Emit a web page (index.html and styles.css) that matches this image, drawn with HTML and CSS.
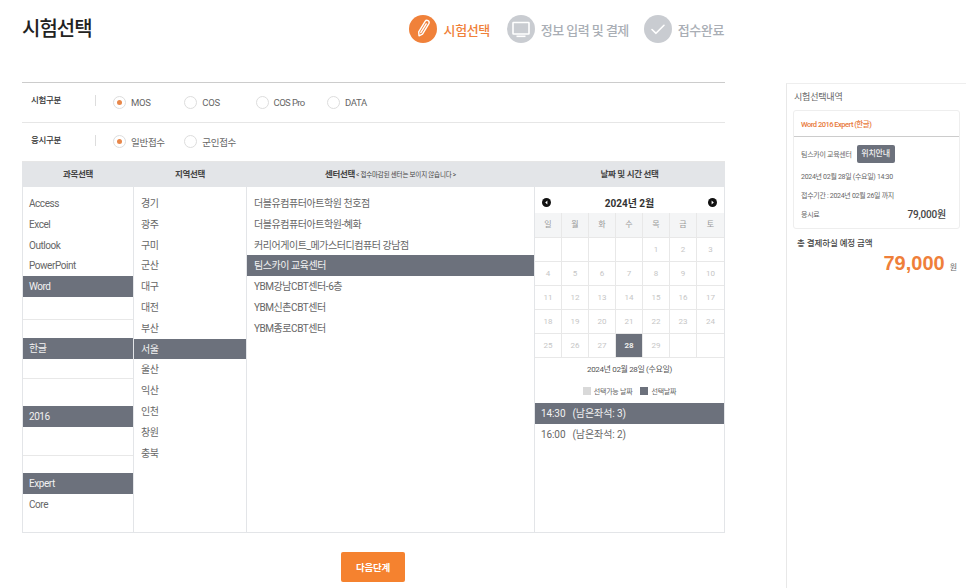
FILE: index.html
```html
<!DOCTYPE html>
<html lang="ko">
  <head>
    <meta charset="utf-8" />
    <title>시험선택</title>
    <link rel="stylesheet" href="styles.css">
  </head>

  <body>
    <div class="page">
      <div class="main">
        <!-- 상단 제목, 단계 -->
        <div class="top">
          <h1 class="title">시험선택</h1>
          <div class="steps">
            <div class="step step-on">
              <span class="step-icon">
                <svg width="28" height="28" viewBox="0 0 28 28" fill="none" stroke="#fff" stroke-width="1.4" stroke-linejoin="round" stroke-linecap="round">
                  <path d="M10 20.8L9.7 16.9L16.1 6.4A2.2 2.2 0 0 1 19.9 8.6L13.5 19.1Z" />
                  <path d="M11.8 17.6L17.2 8.8" />
                </svg>
              </span>
              <span class="step-text">시험선택</span>
            </div>
            <div class="step">
              <span class="step-icon">
                <svg width="28" height="28" viewBox="0 0 28 28" fill="none" stroke="#fff" stroke-width="1.6">
                  <rect x="6" y="7.5" width="16" height="11.5" rx="0.5" />
                  <path d="M9.5 21.3h9" />
                </svg>
              </span>
              <span class="step-text step-text-long">정보 입력 및 결제</span>
            </div>
            <div class="step">
              <span class="step-icon">
                <svg width="28" height="28" viewBox="0 0 28 28" fill="none" stroke="#fff" stroke-width="1.6" stroke-linecap="round" stroke-linejoin="round">
                  <path d="M8 14.5l4 3.8 8-8" />
                </svg>
              </span>
              <span class="step-text">접수완료</span>
            </div>
          </div>
        </div>

        <!-- 시험구분 -->
        <div class="filter filter-first">
          <div class="filter-label">시험구분</div>
          <div class="options">
            <div class="option option-on"><span class="radio"></span>MOS</div>
            <div class="option"><span class="radio"></span>COS</div>
            <div class="option"><span class="radio"></span><span class="tight">COS Pro</span></div>
            <div class="option"><span class="radio"></span>DATA</div>
          </div>
        </div>
        <div class="filter">
          <div class="filter-label">응시구분</div>
          <div class="options">
            <div class="option option-on"><span class="radio"></span>일반접수</div>
            <div class="option"><span class="radio"></span>군인접수</div>
          </div>
        </div>

        <!-- 선택 테이블 -->
        <div class="picker">
          <div class="col col-subject">
            <div class="col-head">과목선택</div>
            <div class="subject-group group-a">
              <div class="item">Access</div>
              <div class="item">Excel</div>
              <div class="item">Outlook</div>
              <div class="item">PowerPoint</div>
              <div class="item item-on">Word</div>
            </div>
            <div class="subject-group group-b">
              <div class="item item-on">한글</div>
            </div>
            <div class="subject-group group-c">
              <div class="item item-on">2016</div>
            </div>
            <div class="subject-group group-d">
              <div class="item item-on">Expert</div>
              <div class="item">Core</div>
            </div>
          </div>

          <div class="col">
            <div class="col-head">지역선택</div>
            <div class="list">
              <div class="item">경기</div>
              <div class="item">광주</div>
              <div class="item">구미</div>
              <div class="item">군산</div>
              <div class="item">대구</div>
              <div class="item">대전</div>
              <div class="item">부산</div>
              <div class="item item-on">서울</div>
              <div class="item">울산</div>
              <div class="item">익산</div>
              <div class="item">인천</div>
              <div class="item">창원</div>
              <div class="item">충북</div>
            </div>
          </div>

          <div class="col">
            <div class="col-head">센터선택<small>&lt; 접수마감된 센터는 보이지 않습니다 &gt;</small></div>
            <div class="list">
              <div class="item">더블유컴퓨터아트학원 천호점</div>
              <div class="item">더블유컴퓨터아트학원-혜화</div>
              <div class="item">커리어게이트_메가스터디컴퓨터 강남점</div>
              <div class="item item-on">팀스카이 교육센터</div>
              <div class="item">YBM강남CBT센터-6층</div>
              <div class="item">YBM신촌CBT센터</div>
              <div class="item">YBM종로CBT센터</div>
            </div>
          </div>

          <div class="col">
            <div class="col-head">날짜 및 시간 선택</div>
            <div class="cal-head">
              <span class="cal-arrow">
                <svg width="9" height="9" viewBox="0 0 9 9"><circle cx="4.5" cy="4.5" r="4.5" fill="#111" /><path d="M5.4 2.4L3.2 4.5l2.2 2.1z" fill="#fff" /></svg>
              </span>
              <span>2024년 2월</span>
              <span class="cal-arrow">
                <svg width="9" height="9" viewBox="0 0 9 9"><circle cx="4.5" cy="4.5" r="4.5" fill="#111" /><path d="M3.6 2.4l2.2 2.1-2.2 2.1z" fill="#fff" /></svg>
              </span>
            </div>
            <div class="cal-grid">
              <div class="dow">일</div><div class="dow">월</div><div class="dow">화</div><div class="dow">수</div><div class="dow">목</div><div class="dow">금</div><div class="dow">토</div>
              <div class="day"></div><div class="day"></div><div class="day"></div><div class="day"></div><div class="day">1</div><div class="day">2</div><div class="day">3</div>
              <div class="day">4</div><div class="day">5</div><div class="day">6</div><div class="day">7</div><div class="day">8</div><div class="day">9</div><div class="day">10</div>
              <div class="day">11</div><div class="day">12</div><div class="day">13</div><div class="day">14</div><div class="day">15</div><div class="day">16</div><div class="day">17</div>
              <div class="day">18</div><div class="day">19</div><div class="day">20</div><div class="day">21</div><div class="day">22</div><div class="day">23</div><div class="day">24</div>
              <div class="day">25</div><div class="day">26</div><div class="day">27</div><div class="day day-on">28</div><div class="day">29</div><div class="day"></div><div class="day"></div>
            </div>
            <div class="cal-date">2024년 02월 28일 (수요일)</div>
            <div class="legend">
              <span class="legend-item"><i class="swatch"></i>선택가능 날짜</span>
              <span class="legend-item"><i class="swatch swatch-on"></i>선택날짜</span>
            </div>
            <div class="time time-on">14:30 &nbsp; (남은좌석: 3)</div>
            <div class="time">16:00 &nbsp; (남은좌석: 2)</div>
          </div>
        </div>

        <div class="actions">
          <button class="next-btn">다음단계</button>
        </div>
      </div>

      <!-- 오른쪽 내역 -->
      <div class="side">
        <div class="side-title">시험선택내역</div>
        <div class="card">
          <div class="card-head">Word 2016 Expert (한글)</div>
          <div class="card-body">
            <div class="card-row">팀스카이 교육센터 <span class="place-btn">위치안내</span></div>
            <div class="card-row">2024년 02월 28일 (수요일) 14:30</div>
            <div class="card-row">접수기간 : 2024년 02월 26일 까지</div>
            <div class="card-row card-fee"><span>응시료</span><b>79,000원</b></div>
          </div>
        </div>
        <div class="total-label">총 결제하실 예정 금액</div>
        <div class="total"><b>79,000</b><span>원</span></div>
      </div>
    </div>
  </body>
</html>
```

FILE: styles.css
```css
* {
  box-sizing: border-box;
}

body {
  margin: 0;
  height: 588px;
  overflow: hidden;
  background: #fff;
  font-family: Roboto, "Noto Sans CJK KR", sans-serif;
  color: #555;
}

.page {
  display: flex;
  align-items: flex-start;
  padding-left: 22px;
}

.main {
  width: 703px;
  flex: none;
}

/* 상단 */
.top {
  display: flex;
  justify-content: space-between;
  height: 60px;
  padding-top: 15px;
  margin-bottom: 22px;
}

.title {
  margin: 1px 0 0;
  font-size: 20px;
  line-height: 27px;
  font-weight: 500;
  letter-spacing: -1px;
  color: #222;
}

.steps {
  display: flex;
  gap: 15px;
  padding-right: 1px;
}

.step {
  display: flex;
  align-items: center;
  gap: 6px;
  height: 28px;
  color: #a9aeb5;
}

.step-icon {
  display: block;
  width: 28px;
  height: 28px;
  border-radius: 50%;
  background: #c9ccd1;
}

.step-icon svg {
  display: block;
}

.step-on {
  gap: 7px;
  margin-right: 2px;
  color: #f0813a;
}

.step-on .step-icon {
  background: #f0813a;
}

.step-text {
  font-size: 13px;
  font-weight: 500;
  letter-spacing: -0.4px;
}

.step-text-long {
  letter-spacing: -0.55px;
}

/* 시험구분, 응시구분 */
.filter {
  display: flex;
  align-items: center;
  height: 39px;
  padding-bottom: 1px;
  border-bottom: 1px solid #e6e6e6;
}

.filter-first {
  height: 41px;
  border-top: 1px solid #ccc;
}

.filter:last-of-type {
  border-bottom: 0;
}

.filter-label {
  width: 74px;
  height: 11px;
  padding-left: 9px;
  margin-top: -2px;
  border-right: 1px solid #ddd;
  font-size: 8.5px;
  line-height: 11px;
  font-weight: 500;
  letter-spacing: -0.3px;
  color: #333;
}

.filter-first .filter-label {
  margin-top: -4px;
}

.options {
  display: flex;
  padding-left: 17px;
}

.option {
  display: flex;
  align-items: center;
  width: 71.3px;
  font-size: 9.5px;
  letter-spacing: -0.3px;
  color: #666;
}

.tight {
  letter-spacing: -0.6px;
}

.radio {
  position: relative;
  width: 13px;
  height: 13px;
  margin-right: 5px;
  border: 1px solid #ddd;
  border-radius: 50%;
  background: #fff;
}

.option-on .radio::after {
  content: "";
  position: absolute;
  top: 3px;
  left: 3px;
  width: 5px;
  height: 5px;
  border-radius: 50%;
  background: #e8874a;
}

/* 선택 테이블 */
.picker {
  display: grid;
  grid-template-columns: 111px 113px 288px 190px;
  height: 371px;
  border-bottom: 1px solid #e3e5e8;
  border-left: 1px solid #e3e5e8;
}

.col {
  border-right: 1px solid #e3e5e8;
  min-width: 0;
}

.col-head {
  height: 25px;
  background: #e3e5e8;
  font-size: 8.5px;
  line-height: 25px;
  font-weight: 700;
  letter-spacing: -0.3px;
  text-align: center;
  color: #444;
}

.col-head small {
  margin-left: 1px;
  font-size: 6.5px;
  font-weight: 400;
  letter-spacing: -0.2px;
}

.list {
  padding-top: 6px;
}

.item {
  height: 20.8px;
  padding-left: 7px;
  font-size: 10px;
  line-height: 22px;
  letter-spacing: -0.45px;
  color: #666;
}

.col-subject .item {
  padding-left: 6px;
}

.item-on {
  background: #6c717c;
  color: #f2f2f2;
}

.subject-group {
  border-bottom: 1px solid #e8e8e8;
}

.group-a {
  padding: 6px 0 22px;
}

.group-b {
  padding: 18px 0 19px;
}

.group-c {
  padding: 27px 0 28px;
}

.group-d {
  padding-top: 17.5px;
  border-bottom: 0;
}

/* 달력 */
.cal-head {
  display: flex;
  justify-content: space-between;
  align-items: center;
  height: 26px;
  padding: 5px 7px 0;
  font-size: 10px;
  font-weight: 700;
  color: #333;
}

.cal-arrow {
  display: block;
  height: 9px;
}

.cal-arrow svg {
  display: block;
}

.cal-grid {
  display: grid;
  grid-template-columns: repeat(7, 1fr);
  grid-template-rows: 25px repeat(5, 24px);
}

.dow,
.day {
  border-right: 1px solid #e8e8e8;
  border-bottom: 1px solid #e8e8e8;
  font-size: 8px;
  text-align: center;
}

.dow:nth-child(7n),
.day:nth-child(7n) {
  border-right: 0;
}

.dow {
  background: #f4f5f6;
  line-height: 24px;
  color: #999;
}

.day {
  line-height: 23px;
  color: #c6c6c6;
}

.day-on {
  background: #6c717c;
  font-weight: 700;
  color: #eee;
}

.cal-date {
  height: 24px;
  font-size: 8px;
  line-height: 24px;
  letter-spacing: -0.35px;
  text-align: center;
  color: #555;
}

.legend {
  display: flex;
  justify-content: center;
  gap: 8px;
  height: 21px;
  padding-top: 3px;
}

.legend-item {
  display: flex;
  align-items: center;
  gap: 3px;
  height: 12px;
  font-size: 7px;
  letter-spacing: -0.25px;
  color: #666;
}

.swatch {
  display: block;
  width: 8px;
  height: 8px;
  background: #d9d9d9;
}

.swatch-on {
  background: #6c717c;
}

.time {
  height: 21px;
  padding-left: 6px;
  font-size: 10px;
  line-height: 21px;
  letter-spacing: -0.1px;
  color: #666;
}

.time-on {
  background: #6c717c;
  color: #f2f2f2;
}

.actions {
  display: flex;
  justify-content: center;
  padding: 19px 1px 0 0;
}

.next-btn {
  width: 64px;
  height: 30px;
  padding: 0;
  border: 0;
  border-radius: 2px;
  background: #f5822f;
  font-family: inherit;
  font-size: 9.5px;
  font-weight: 700;
  letter-spacing: -0.3px;
  color: #fff;
}

/* 오른쪽 내역 */
.side {
  flex: none;
  width: 190px;
  height: 505px;
  margin: 83px 0 0 61px;
  padding: 7px 0 0 6px;
  border-top: 1px solid #eee;
  border-left: 1px solid #e8e8e8;
}

.side-title {
  height: 19px;
  padding-left: 1px;
  font-size: 9px;
  line-height: 12px;
  letter-spacing: -0.2px;
  color: #666;
}

.card {
  width: 167px;
  height: 119px;
  border: 1px solid #eee;
  border-radius: 3px;
}

.card-head {
  height: 26px;
  padding-left: 7px;
  border-bottom: 1px solid #ccc;
  font-size: 7.5px;
  font-weight: 500;
  line-height: 28px;
  letter-spacing: -0.5px;
  color: #e8793a;
}

.card-body {
  padding: 8px 7px 0;
}

.card-row {
  display: flex;
  align-items: center;
  height: 19px;
  font-size: 7px;
  letter-spacing: -0.3px;
  color: #666;
}

.card-row:first-child {
  height: 18px;
  margin-bottom: 3px;
}

.card-fee {
  justify-content: space-between;
  padding-right: 6px;
}

.card-fee b {
  font-size: 10px;
  font-weight: 500;
  letter-spacing: -0.2px;
  color: #444;
}

.place-btn {
  display: block;
  width: 38px;
  height: 18px;
  margin-left: 5px;
  border-radius: 2px;
  background: #6c717c;
  font-size: 8px;
  font-weight: 500;
  line-height: 18px;
  letter-spacing: -0.2px;
  text-align: center;
  color: #eee;
}

.total-label {
  margin-top: 7px;
  padding-left: 4px;
  font-size: 8.5px;
  line-height: 14px;
  font-weight: 500;
  letter-spacing: -0.1px;
  color: #444;
}

.total {
  display: flex;
  justify-content: flex-end;
  align-items: baseline;
  gap: 5px;
  width: 164px;
  color: #666;
  font-size: 8px;
}

.total b {
  font-family: "Liberation Sans", sans-serif;
  font-size: 20px;
  line-height: 26px;
  color: #ef7f3a;
}
```
